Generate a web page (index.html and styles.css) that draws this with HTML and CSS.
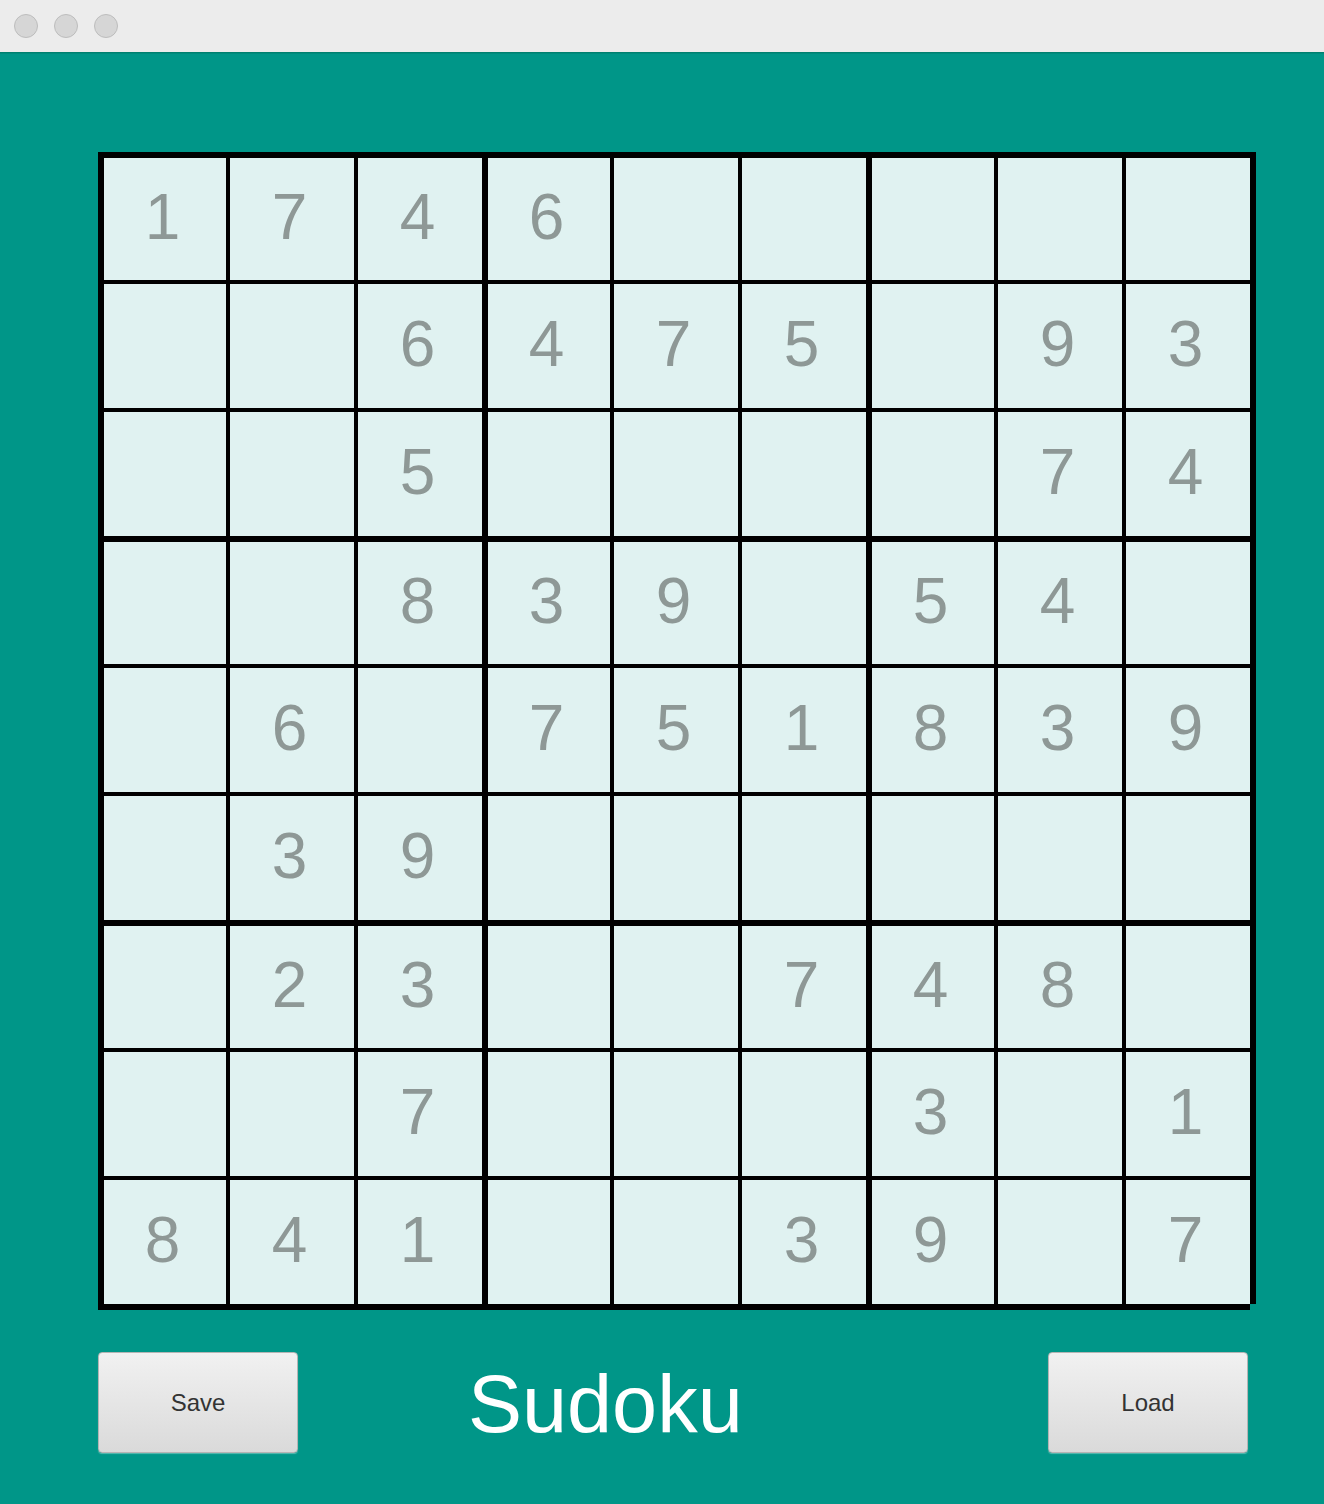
FILE: index.html
```html
<!DOCTYPE html>
<html>
<head>
<meta charset="utf-8">
<link rel="stylesheet" href="styles.css">
</head>
<body>
<div class="window">
  <div class="titlebar">
    <span class="light"></span><span class="light"></span><span class="light"></span>
  </div>
  <div class="content">
    <div class="board">
      <div class="cell">1</div><div class="cell">7</div><div class="cell">4</div><div class="cell">6</div><div class="cell"></div><div class="cell"></div><div class="cell"></div><div class="cell"></div><div class="cell"></div>
      <div class="cell"></div><div class="cell"></div><div class="cell">6</div><div class="cell">4</div><div class="cell">7</div><div class="cell">5</div><div class="cell"></div><div class="cell">9</div><div class="cell">3</div>
      <div class="cell"></div><div class="cell"></div><div class="cell">5</div><div class="cell"></div><div class="cell"></div><div class="cell"></div><div class="cell"></div><div class="cell">7</div><div class="cell">4</div>
      <div class="cell"></div><div class="cell"></div><div class="cell">8</div><div class="cell">3</div><div class="cell">9</div><div class="cell"></div><div class="cell">5</div><div class="cell">4</div><div class="cell"></div>
      <div class="cell"></div><div class="cell">6</div><div class="cell"></div><div class="cell">7</div><div class="cell">5</div><div class="cell">1</div><div class="cell">8</div><div class="cell">3</div><div class="cell">9</div>
      <div class="cell"></div><div class="cell">3</div><div class="cell">9</div><div class="cell"></div><div class="cell"></div><div class="cell"></div><div class="cell"></div><div class="cell"></div><div class="cell"></div>
      <div class="cell"></div><div class="cell">2</div><div class="cell">3</div><div class="cell"></div><div class="cell"></div><div class="cell">7</div><div class="cell">4</div><div class="cell">8</div><div class="cell"></div>
      <div class="cell"></div><div class="cell"></div><div class="cell">7</div><div class="cell"></div><div class="cell"></div><div class="cell"></div><div class="cell">3</div><div class="cell"></div><div class="cell">1</div>
      <div class="cell">8</div><div class="cell">4</div><div class="cell">1</div><div class="cell"></div><div class="cell"></div><div class="cell">3</div><div class="cell">9</div><div class="cell"></div><div class="cell">7</div>
    </div>
    <div class="controls">
      <button class="btn">Save</button>
      <div class="title">Sudoku</div>
      <button class="btn btn-right">Load</button>
    </div>
  </div>
</div>
</body>
</html>
```
FILE: styles.css
```css
html, body {
  margin: 0;
  padding: 0;
}
body {
  width: 1324px;
  height: 1504px;
  background: #009688;
  font-family: "Liberation Sans", Arial, sans-serif;
  overflow: hidden;
}
.window {
  width: 1324px;
  height: 1504px;
  display: flex;
  flex-direction: column;
}
.titlebar {
  height: 52px;
  flex: 0 0 52px;
  background: #ececec;
  box-sizing: border-box;
  display: flex;
  align-items: center;
  gap: 16px;
  padding-left: 14px;
  box-shadow: 0 1px 0 #00806f, 0 2px 0 #008b7d;
  position: relative;
  z-index: 1;
}
.light {
  width: 24px;
  height: 24px;
  box-sizing: border-box;
  border-radius: 50%;
  background: #d6d6d6;
  border: 1px solid #bdbdbd;
}
.content {
  padding: 100px 0 0 98px;
  display: flex;
  flex-direction: column;
}
.board {
  position: relative;
  width: 1158px;
  box-sizing: border-box;
  background: #000;
  padding: 4px 6px 6px 4px;
  display: grid;
  grid-template-columns: repeat(9, 124px);
  grid-template-rows: repeat(9, 124px);
  gap: 4px;
}
.board::after {
  content: "";
  position: absolute;
  right: 0;
  bottom: 0;
  width: 6px;
  height: 6px;
  background: #009688;
}
.cell {
  background: #e0f2f1;
  color: #8e9896;
  font-size: 64px;
  display: flex;
  align-items: center;
  justify-content: center;
  padding: 0 5px 4px 0;
  box-sizing: border-box;
}
.cell:nth-child(3n+1) {
  margin-left: 2px;
}
.cell:nth-child(-n+9),
.cell:nth-child(n+28):nth-child(-n+36),
.cell:nth-child(n+55):nth-child(-n+63) {
  margin-top: 2px;
}
.controls {
  margin-top: 42px;
  width: 1150px;
  display: flex;
  align-items: center;
}
.btn {
  width: 200px;
  height: 101px;
  box-sizing: border-box;
  border: 1px solid #b4b4b4;
  border-radius: 4px;
  background: linear-gradient(#f1f1f1, #dadada);
  box-shadow: 0 1px 1px rgba(255,255,255,0.35);
  font-family: "Liberation Sans", Arial, sans-serif;
  font-size: 24px;
  color: #333;
  padding: 0;
}
.title {
  margin-left: 170px;
  color: #fff;
  font-size: 81px;
  line-height: 1;
  padding-top: 4px;
}
.btn-right {
  margin-left: auto;
}
```
